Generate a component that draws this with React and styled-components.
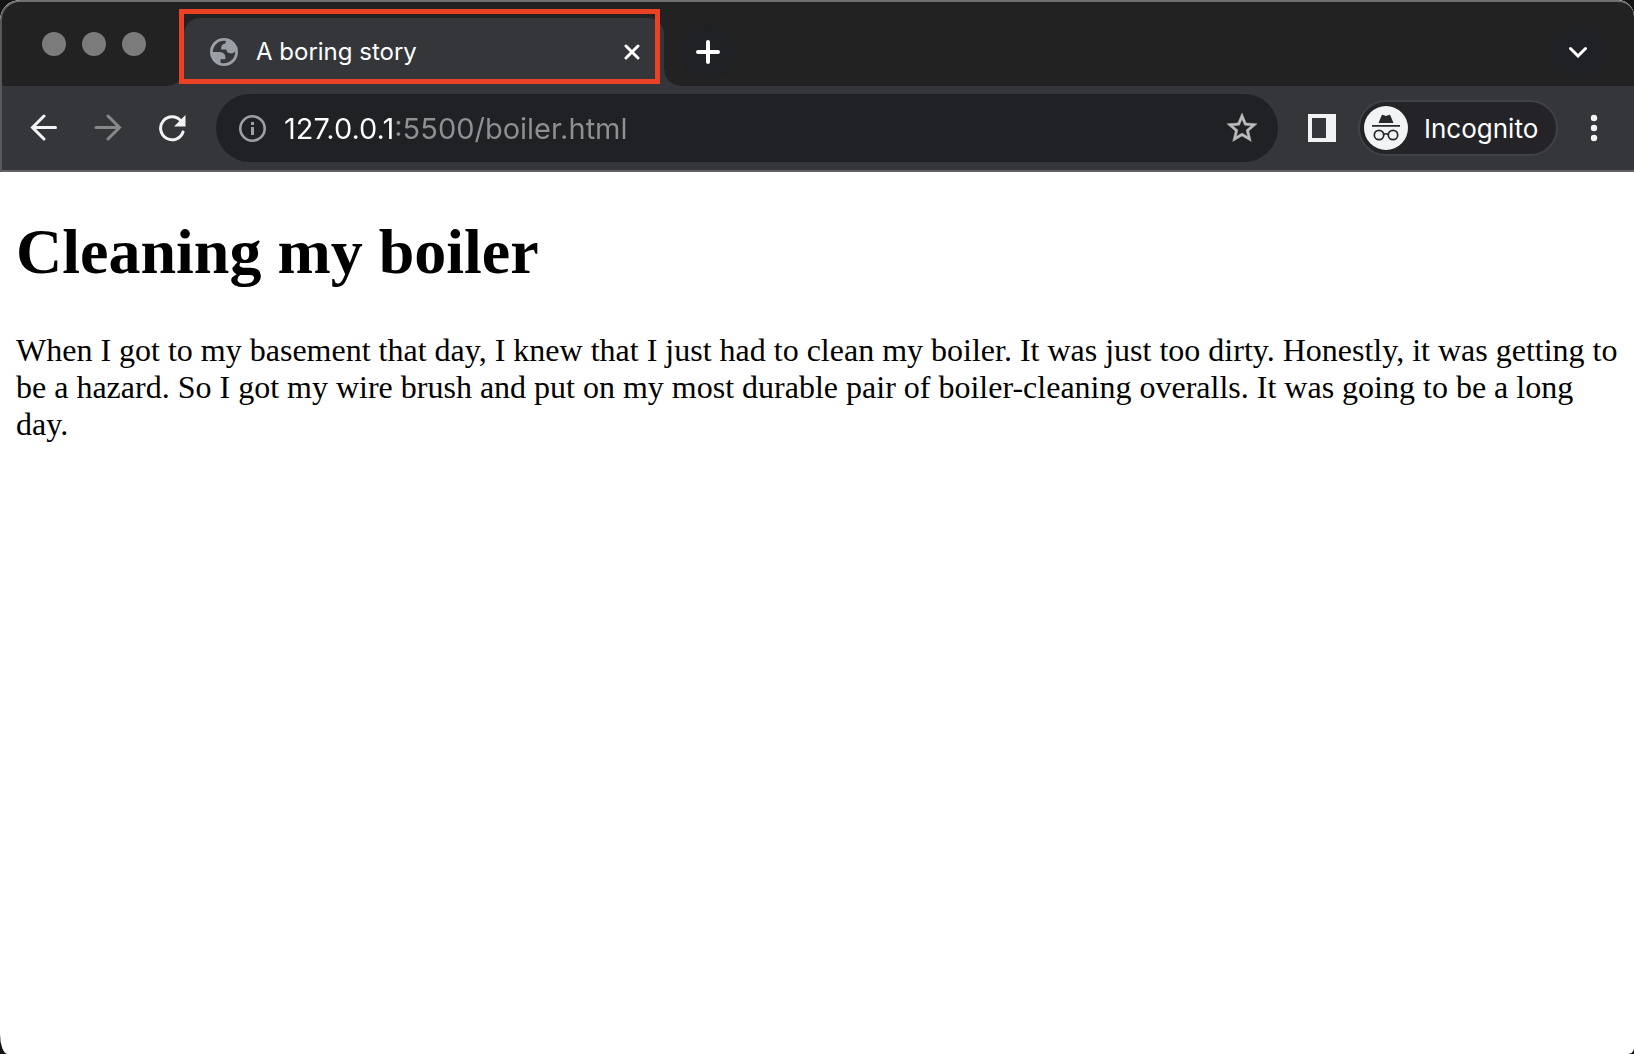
import React from "react";
import styled, { createGlobalStyle } from "styled-components";

const UI_FONT = `Inter, Roboto, "Liberation Sans", sans-serif`;

const GlobalStyle = createGlobalStyle`
  *, *::before, *::after { box-sizing: border-box; }
  body { margin: 0; background: #141414; }
  button, input { font: inherit; color: inherit; border: 0; margin: 0; padding: 0; background: none; }
  svg { display: block; flex: none; }
`;

const Window = styled.div`
  display: flex;
  flex-direction: column;
  min-height: 100vh;
  overflow: hidden;
  background: #ffffff;
  border-radius: 20px 16px 6px 8px / 20px 16px 6px 20px;
`;

const Chrome = styled.header`
  font-family: ${UI_FONT};
  color: #ffffff;
  background: #222222;
  border-top: 2px solid #6e6e6e;
  border-left: 2px solid #58595c;
  border-radius: 20px 16px 0 0;
  overflow: hidden;
`;

const TabStrip = styled.div`
  display: flex;
  align-items: center;
  height: 84px;
  padding: 0 28px 0 40px;
`;

const Lights = styled.div`
  display: flex;
  gap: 16px;
  margin-right: 38px;
`;

const Light = styled.button`
  width: 24px;
  height: 24px;
  border-radius: 50%;
  background: #7b7b7b;
`;

const TabRow = styled.div`
  display: flex;
  flex: 1;
  align-items: center;
  gap: 16px;
  height: 100%;
  padding-top: 16px;
`;

const Tab = styled.div`
  position: relative;
  display: flex;
  align-items: center;
  gap: 18px;
  width: 480px;
  height: 100%;
  padding: 0 16px 0 26px;
  background: #35363a;
  border-radius: 16px 16px 0 0;

  &::before,
  &::after {
    content: "";
    position: absolute;
    bottom: 0;
    width: 16px;
    height: 16px;
  }
  &::before {
    right: 100%;
    background: radial-gradient(circle at 0 0, transparent 15px, #35363a 16px);
  }
  &::after {
    left: 100%;
    background: radial-gradient(circle at 100% 0, transparent 15px, #35363a 16px);
  }
`;

const TabTitle = styled.span`
  flex: 1;
  font-size: 24px;
  line-height: 32px;
  white-space: nowrap;
`;

const TabHighlight = styled.div`
  position: absolute;
  z-index: 1;
  inset: -9px 4px 2px -5px;
  border: 5px solid #eb4226;
  pointer-events: none;
`;

const CloseButton = styled.button`
  display: grid;
  place-items: center;
  width: 32px;
  height: 32px;
`;

const RoundButton = styled.button`
  display: grid;
  place-items: center;
  width: 56px;
  height: 56px;
  border-radius: 50%;
  background: #202124;
  margin-left: ${(p) => (p.$end ? "auto" : "0")};
`;

const Toolbar = styled.div`
  display: flex;
  align-items: center;
  gap: 12px;
  height: 86px;
  padding: 0 8px 0 10px;
  background: #35363a;
  border-bottom: 2px solid #626367;
`;

const Group = styled.div`
  display: flex;
  align-items: center;
  gap: ${(p) => p.$gap || "0"};
`;

const ToolButton = styled.button`
  display: grid;
  place-items: center;
  width: 64px;
  height: 56px;
  color: ${(p) => (p.disabled ? "#87888a" : "#f1f3f4")};
`;

const Omnibox = styled.form`
  display: flex;
  flex: 1;
  align-items: center;
  gap: 18px;
  min-width: 0;
  height: 68px;
  padding: 0 16px 0 22px;
  border-radius: 34px;
  background: #202124;
`;

const IconButton = styled.button`
  display: grid;
  place-items: center;
  width: ${(p) => p.$width};
  height: 40px;
  color: ${(p) => p.$color};
`;

/* The host is drawn white, the port and path after it grey. */
const Address = styled.input`
  flex: 1;
  min-width: 0;
  height: 40px;
  font-size: 29px;
  outline: none;
  background: linear-gradient(to right, #ffffff 112px, #8f9092 112px);
  background-clip: text;
  -webkit-background-clip: text;
  -webkit-text-fill-color: transparent;
`;

const Profile = styled.button`
  display: flex;
  align-items: center;
  gap: 16px;
  width: 200px;
  height: 56px;
  padding-left: 4px;
  border: 2px solid #404145;
  border-radius: 28px;
  background: #242428;
  font-size: 26px;
`;

const Page = styled.main`
  flex: 1;
  padding: 0 16px;
  font-family: "Liberation Serif", serif;
  font-size: 32px;
  line-height: 37px;
  color: #000000;
`;

const Heading = styled.h1`
  margin: 43px 0;
  font-size: 64px;
  line-height: 74px;
`;

const Story = styled.p`
  margin: 0;
`;

const GlobeIcon = () => (
  <svg width="28" height="28" viewBox="2 2 20 20" fill="#9aa0a6">
    <path
      fillRule="evenodd"
      d="M12 2a10 10 0 1 0 0 20 10 10 0 0 0 0-20zM4 12h4.400c3.407.022 4.922 1.730 4.543 5.127H9.488v2.470a8.004 8.004 0 0 0 10.498-8.083C19.327 12.504 18.332 13 17 13c-2.137 0-3.206-.916-3.206-2.750h-3.748c-.274-2.728.683-4.092 2.870-4.092 0-.975.327-1.597.811-1.970A8.004 8.004 0 0 0 4 12z"
    />
  </svg>
);

const CloseIcon = () => (
  <svg width="16" height="16" viewBox="0 0 16 16" stroke="#fff" strokeWidth="3" strokeLinecap="round">
    <path d="M2 2l12 12M14 2l-12 12" />
  </svg>
);

const PlusIcon = () => (
  <svg width="24" height="24" viewBox="0 0 24 24" stroke="#fff" strokeWidth="4" strokeLinecap="round">
    <path d="M12 2v20M2 12h20" />
  </svg>
);

const ChevronIcon = () => (
  <svg width="18" height="12" viewBox="0 0 18 12" fill="none" stroke="#fff" strokeWidth="3" strokeLinecap="round">
    <path d="M1.500 2.500L9 10 16.500 2.500" />
  </svg>
);

const ArrowIcon = ({ flip }) => (
  <svg width="28" height="28" viewBox="0 0 28 28" fill="none" stroke="currentColor" strokeWidth="3" strokeLinecap="round">
    {flip ? <path d="M2 13.500h23M14 2l11.500 11.500L14 25" /> : <path d="M25.500 13.500H3M14 2L2.500 13.500 14 25" />}
  </svg>
);

const ReloadIcon = () => (
  <svg width="28" height="28" viewBox="0 0 28 28" fill="none">
    <path d="M23 7A11.500 11.500 0 1 0 25 18" stroke="currentColor" strokeWidth="3" strokeLinecap="round" />
    <path d="M27.500 1v11.500H16z" fill="currentColor" />
  </svg>
);

const InfoIcon = () => (
  <svg width="28" height="28" viewBox="0 0 28 28" fill="#9aa0a6">
    <circle cx="14.500" cy="14.500" r="12.200" fill="none" stroke="#9aa0a6" strokeWidth="2.600" />
    <path d="M13 8h3v3h-3zM13 13h3v8h-3z" />
  </svg>
);

const StarIcon = () => (
  <svg width="30" height="30" viewBox="2 2 20 20" fill="currentColor" stroke="currentColor" strokeWidth="0.300">
    <path d="M22 9.240l-7.190-.62L12 2 9.190 8.630 2 9.240l5.460 4.730L5.820 21 12 17.270 18.180 21l-1.630-7.030L22 9.240zM12 15.400l-3.760 2.270 1-4.280-3.320-2.880 4.380-.38L12 6.100l1.710 4.040 4.380.38-3.320 2.880 1 4.280L12 15.400z" />
  </svg>
);

const PanelIcon = () => (
  <svg width="28" height="28" viewBox="0 0 28 28" fill="currentColor">
    <path fillRule="evenodd" d="M0 0h28v28H0zM4 4v20h14V4z" />
  </svg>
);

const IncognitoIcon = () => (
  <svg width="44" height="44" viewBox="0 0 44 44" fill="none">
    <circle cx="22" cy="22" r="22" fill="#f1f3f4" />
    <path d="M14.500 17l3-7.300c.3-.8 1-1 1.700-.7l2.800.9 2.800-.9c.7-.3 1.400-.1 1.700.7l3 7.300z" fill="#28292c" />
    <path d="M8 19.800h28" stroke="#28292c" strokeWidth="1.800" />
    <circle cx="15" cy="29" r="4.700" stroke="#28292c" strokeWidth="1.700" />
    <circle cx="29" cy="29" r="4.700" stroke="#28292c" strokeWidth="1.700" />
    <path d="M19.700 28.500q2.300-1.500 4.600 0" stroke="#28292c" strokeWidth="1.700" />
  </svg>
);

const MenuIcon = () => (
  <svg width="8" height="28" viewBox="0 0 8 28" fill="currentColor">
    <circle cx="4" cy="4" r="3.200" />
    <circle cx="4" cy="14" r="3.200" />
    <circle cx="4" cy="24" r="3.200" />
  </svg>
);

export default function App() {
  return (
    <>
      <GlobalStyle />
      <Window>
        <Chrome>
          <TabStrip>
            <Lights>
              <Light aria-label="Close window" />
              <Light aria-label="Minimize window" />
              <Light aria-label="Zoom window" />
            </Lights>
            <TabRow>
              <Tab>
                <GlobeIcon />
                <TabTitle>A boring story</TabTitle>
                <CloseButton aria-label="Close tab"><CloseIcon /></CloseButton>
                <TabHighlight />
              </Tab>
              <RoundButton aria-label="New tab"><PlusIcon /></RoundButton>
              <RoundButton $end aria-label="Search tabs"><ChevronIcon /></RoundButton>
            </TabRow>
          </TabStrip>
          <Toolbar>
            <Group>
              <ToolButton aria-label="Back"><ArrowIcon /></ToolButton>
              <ToolButton aria-label="Forward" disabled><ArrowIcon flip /></ToolButton>
              <ToolButton aria-label="Reload"><ReloadIcon /></ToolButton>
            </Group>
            <Omnibox onSubmit={(e) => e.preventDefault()}>
              <IconButton type="button" $width="28px" $color="#9aa0a6" aria-label="Site information"><InfoIcon /></IconButton>
              <Address aria-label="Address" spellCheck={false} defaultValue="127.0.0.1:5500/boiler.html" />
              <IconButton type="button" $width="40px" $color="#bcbcbd" aria-label="Bookmark this tab"><StarIcon /></IconButton>
            </Omnibox>
            <Group $gap="4px">
              <ToolButton aria-label="Side panel"><PanelIcon /></ToolButton>
              <Profile><IncognitoIcon />Incognito</Profile>
              <ToolButton aria-label="Menu"><MenuIcon /></ToolButton>
            </Group>
          </Toolbar>
        </Chrome>
        <Page>
          <Heading>Cleaning my boiler</Heading>
          <Story>
            When I got to my basement that day, I knew that I just had to clean my boiler. It was just too dirty.
            Honestly, it was getting to be a hazard. So I got my wire brush and put on my most durable pair of
            boiler-cleaning overalls. It was going to be a long day.
          </Story>
        </Page>
      </Window>
    </>
  );
}
